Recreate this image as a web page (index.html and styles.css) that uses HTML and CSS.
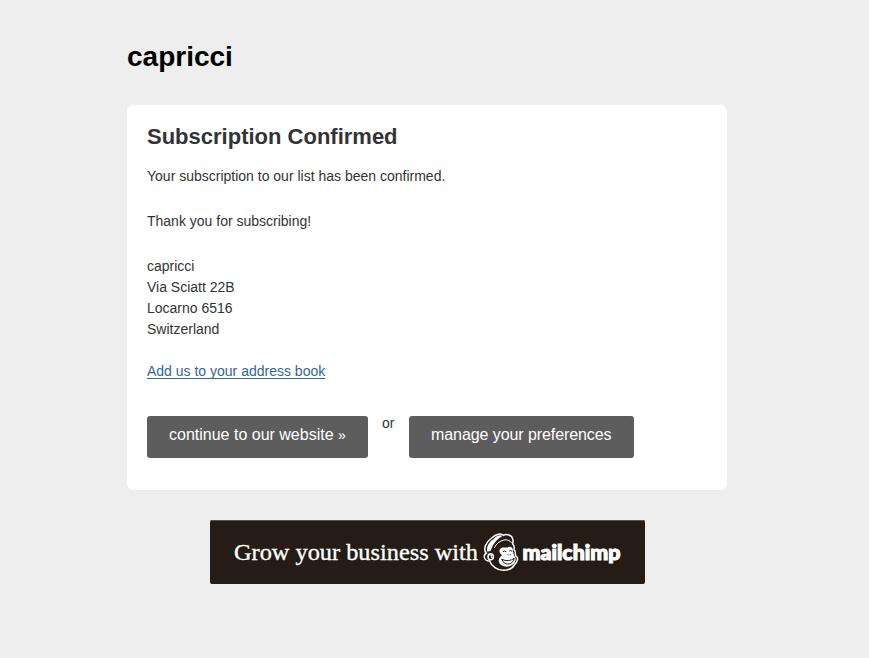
FILE: index.html
```html
<!DOCTYPE html>
<html lang="en"><head><meta charset="utf-8"><title>capricci</title><link rel="stylesheet" href="styles.css"></head>
<body>
<main class="page">
<h1 class="brand">capricci</h1>
<section class="card">
<h2 class="title">Subscription Confirmed</h2>
<p class="text">Your subscription to our list has been confirmed.</p>
<p class="text">Thank you for subscribing!</p>
<address class="address">capricci<br>Via Sciatt 22B<br>Locarno 6516<br>Switzerland</address>
<a class="link" href="#">Add us to your address book</a>
<div class="actions"><a class="button website" href="#">continue to our website <span class="arrow">»</span></a><span class="or">or</span><a class="button preferences" href="#">manage your preferences</a></div>
</section>
<a class="badge" href="#">
<svg width="435" height="64" viewBox="0 0 435 64">
<text class="grow" x="24" y="39.500" textLength="244" lengthAdjust="spacingAndGlyphs">Grow your business with</text>
<g transform="translate(265 8) scale(.33333)">
<path class="outline" d="M34 75C23 64 33 42 50 30C64 17 78 15 85 22C94 17 111 21 113 33C116 41 112 46 114 50C120 54 117 60 117 65C123 68 120 79 122 84C132 88 127 103 119 109C109 129 78 132 60 119C51 113 46 105 44 99C27 99 23 82 34 75Z"/>
<path class="fill" d="M37 71C33 56 43 42 55 34C65 23 76 19 82 24C72 30 61 40 55 50C50 57 50 65 46 69Z"/>
<path class="line" d="M58 60C63 48 74 39 87 36C96 34 105 37 111 46"/>
<path class="fill" d="M75 64C81 54 93 61 98 58C107 52 116 60 113 70C116 76 115 79 118 84C126 92 122 106 106 114C89 120 74 111 72 102C69 93 76 87 81 82C75 76 71 70 75 64Z"/>
<ellipse class="outline" cx="47" cy="86" rx="8" ry="9"/>
<path class="line" d="M44 82Q50 78 51 84Q46 85 50 90"/>
<path class="feature" d="M83 71Q88 67 94 71M103 69Q107 66 111 69M98 80L101 81M104 79L107 80M80 94Q101 103 118 91Q113 109 96 108Q85 107 80 94"/>
</g>
<text class="chimp" x="312.500" y="39.500" textLength="98" lengthAdjust="spacingAndGlyphs">mailchimp</text>
</svg></a>
</main>
</body></html>
```

FILE: styles.css
```css
body{margin:0;background:#eee;font-family:"Liberation Sans",Helvetica,Arial,sans-serif;font-size:14px;line-height:21px;color:#333}
.page{width:600px;margin-left:127px;padding-top:36px}
.brand{margin:0 0 27px;font-size:28px;line-height:42px;color:#000}
.card{box-sizing:border-box;height:385px;padding:21px 20px 20px;background:#fff;border-radius:6px}
.title{margin:0 0 18px;font-size:22px;line-height:22px}
.text{margin:0 0 24px}
.address{font-style:normal;margin-bottom:21px}
.link{color:#336699;text-decoration:underline 1px;text-underline-offset:2px;text-decoration-skip-ink:none}
.actions{display:flex;margin-top:34px}
.button{box-sizing:border-box;height:42px;padding:8px 0 0 22px;background:#5d5d5d;border-radius:3px;color:#fff;font-size:16px;text-decoration:none;white-space:nowrap}
.website{width:221px}
.arrow{font-size:14px}
.preferences{width:225px;letter-spacing:-.08px}
.or{width:13px;margin:-3px 14px 0}
.badge{display:block;box-sizing:border-box;width:435px;height:64px;margin:30px 0 0 83px;background:#241c15;border-radius:2px;box-shadow:inset 0 1px #59544f}
.badge svg{display:block}
.grow{font:500 23.5px "Liberation Serif",serif;fill:#fff;stroke:#fff;stroke-width:.35px}
.chimp{font:900 20.5px Lato,sans-serif;fill:#fff;stroke:#fff;stroke-width:1.1px}
.outline{fill:#241c15;stroke:#fff;stroke-width:4.5}
.fill{fill:#fff}
.line{fill:none;stroke:#fff;stroke-width:3}
.feature{fill:none;stroke:#241c15;stroke-width:3}
```
